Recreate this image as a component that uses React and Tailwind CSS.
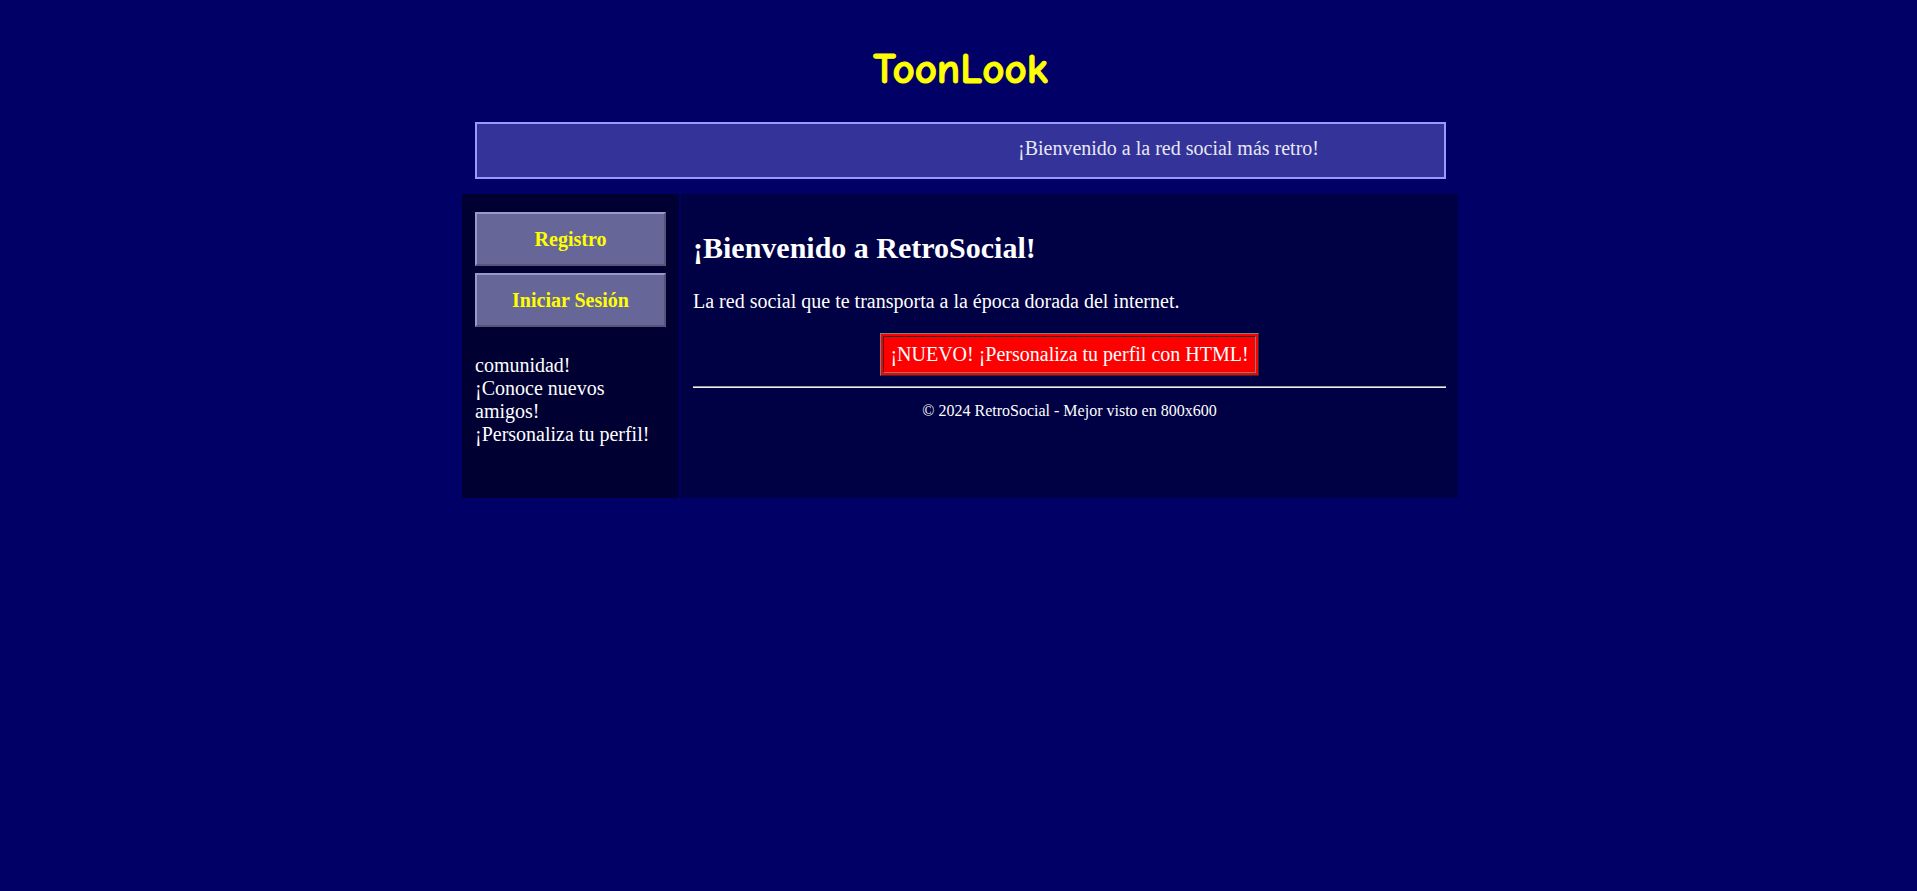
const navButton =
  "w-full border-2 border-t-[#9999cc] border-l-[#9999cc] border-r-[#555577] border-b-[#555577] bg-[#666699] py-[13px] h-[54px] font-bold text-[#ffff00] leading-[23px] text-center cursor-pointer";

const news = ["comunidad!", "¡Conoce nuevos amigos!", "¡Personaliza tu perfil!"];

export default function App() {
  return (
    <div className="min-h-screen bg-[#000066] pl-[3px] text-[20px] leading-[23px] text-white font-['Times_New_Roman','Liberation_Serif',serif]">
      <div className="mx-auto w-full max-w-[996px]">
        <header className="pt-[39px] pr-[12px] pb-[15px] pl-[13px]">
          <h1 className="text-center font-['Comic_Sans_MS','Comic_Neue',Lato,sans-serif] text-[43px] leading-[60px] font-bold text-[#ffff00] [-webkit-text-stroke:1px_#ffff00]">
            ToonLook
          </h1>
          <div className="mt-[23px] flex justify-end border-2 border-[#9999ff] bg-[#333399] pt-[13px] pr-[125px] pb-[17px]">
            <p className="text-[#e8e8f4]">¡Bienvenido a la red social más retro!</p>
          </div>
        </header>
        <div className="flex gap-[2px]">
          <nav className="w-[217px] shrink-0 bg-[#000033] px-[13px] pt-[18px] pb-[52px]">
            <div className="flex flex-col gap-[7px]">
              <button type="button" className={navButton}>Registro</button>
              <button type="button" className={navButton}>Iniciar Sesión</button>
            </div>
            <div className="mt-[27px]">
              {news.map((line) => (
                <p key={line}>{line}</p>
              ))}
            </div>
          </nav>
          <main className="min-w-0 flex-1 bg-[#000044] px-[12px] pt-[37px]">
            <h2 className="text-[30px] leading-[34px] font-bold">¡Bienvenido a RetroSocial!</h2>
            <p className="mt-[25px]">La red social que te transporta a la época dorada del internet.</p>
            <div className="mx-auto mt-[20px] w-fit border border-t-[#808080] border-l-[#808080] border-r-[#2c2c2c] border-b-[#2c2c2c] bg-[#ff0000] p-[2px]">
              <p className="border border-t-[#2c2c2c] border-l-[#2c2c2c] border-r-[#808080] border-b-[#808080] px-[6px] py-[6px]">
                ¡NUEVO! ¡Personaliza tu perfil con HTML!
              </p>
            </div>
            <hr className="mt-[10px] h-[2px] border-t border-b border-t-[#9a9a9a] border-b-[#eeeeee]" />
            <footer className="mt-[14px] text-center text-[16px] leading-[18px]">
              © 2024 RetroSocial - Mejor visto en 800x600
            </footer>
          </main>
        </div>
      </div>
    </div>
  );
}
